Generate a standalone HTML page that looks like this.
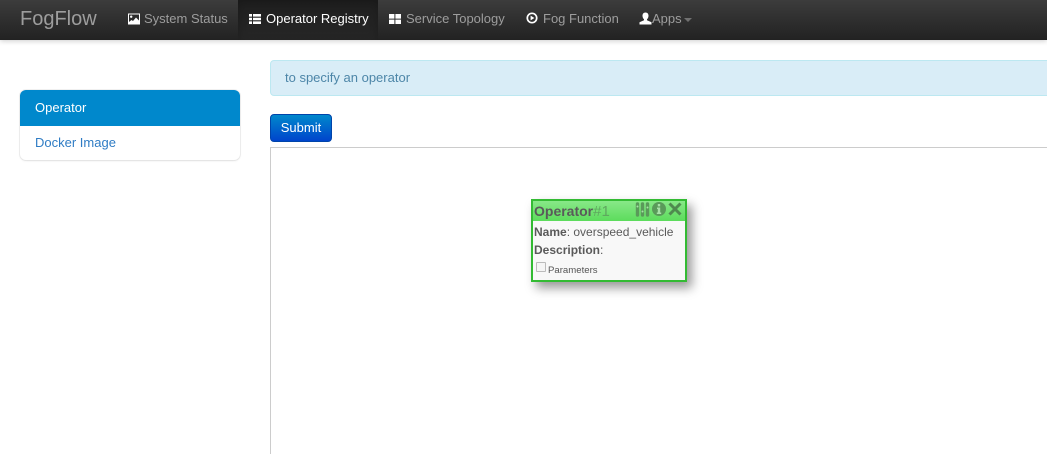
<!DOCTYPE html>
<html>
<head>
<meta charset="utf-8">
<style>
*{box-sizing:border-box}
html,body{margin:0;padding:0;width:1047px;height:454px;overflow:hidden;background:#fff;font-family:"Liberation Sans",sans-serif;font-size:13px;color:#333;position:relative}
.abs{position:absolute;white-space:nowrap}
#nav{position:absolute;left:0;top:0;width:1047px;height:40px;background:linear-gradient(to bottom,#3c3c3c,#222);box-shadow:0 1px 5px rgba(0,0,0,.2)}
#active{position:absolute;left:238px;top:0;width:140px;height:40px;background:linear-gradient(to bottom,#1f1f1f,#262626);box-shadow:inset 0 3px 9px rgba(0,0,0,.2)}
.brand{left:20px;top:7px;font-size:20px;line-height:24px;color:#9d9d9d}
.nl{top:10px;line-height:18px;font-size:13px;color:#9d9d9d}
.ic{position:absolute}
#side{position:absolute;left:20px;top:90px;width:220px;height:70px;border-radius:6px;box-shadow:0 0 0 1px rgba(0,0,0,.05),0 1px 2px rgba(0,0,0,.08);background:#fff;overflow:hidden}
#side .a{height:36px;background:#0088cc;color:#fff;padding:9px 15px;line-height:18px;font-size:13px}
#side .b{padding:8px 15px;line-height:18px;font-size:13px;color:#2f7cc4}
#alert{position:absolute;left:270px;top:60px;width:790px;height:36px;background:#d9edf7;border:1px solid #bce8f1;border-radius:4px;color:#4d86a8;padding:8px 14px;line-height:18px;font-size:13px}
#btn{position:absolute;left:270px;top:114px;width:62px;height:28px;border-radius:4px;background:linear-gradient(to bottom,#0088cc,#0044cc);border:1px solid #0044aa;color:#fff;text-align:center;line-height:25px;font-size:13px}
#canvas{position:absolute;left:270px;top:147px;width:800px;height:320px;border:1px solid #ccc}
#op{position:absolute;left:531px;top:199px;width:156px;height:83px;border:2px solid #33bb33;background:#f8f8f8;box-shadow:5px 6px 10px rgba(0,0,0,.4)}
#ophead{position:absolute;left:0;top:0;width:152px;height:20px;background:linear-gradient(to bottom,#88e888,#5cdc5c)}
</style>
</head>
<body>
<div id="nav"></div>
<div id="active"></div>
<div class="abs brand">FogFlow</div>

<svg class="ic" style="left:128px;top:13px" width="12" height="12" viewBox="0 0 12 12"><rect width="12" height="11" y="0.5" fill="#fff"/><rect x="1" y="1.5" width="10" height="9" fill="#2c2c2c"/><circle cx="3.2" cy="3.7" r="1.2" fill="#fff"/><path d="M1 10.5V9l2.5-2 1.5 1 3-3.5 3 3v3z" fill="#fff"/></svg>
<div class="abs nl" style="left:144px">System Status</div>

<svg class="ic" style="left:249px;top:13px" width="12" height="12" viewBox="0 0 12 12" fill="#fff"><path d="M0 1h3v2.6H0zM4 1h8v2.6H4zM0 4.700h3v2.600H0zM4 4.700h8v2.600H4zM0 8.400h3V11H0zM4 8.400h8V11H4z"/></svg>
<div class="abs nl" style="left:266px;color:#fff">Operator Registry</div>

<svg class="ic" style="left:389px;top:13px" width="12" height="12" viewBox="0 0 12 12" fill="#fff"><path d="M0 1h5.400v4.600H0zM6.400 1H12v4.600H6.400zM0 6.600h5.400V11H0zM6.400 6.600H12V11H6.400z"/></svg>
<div class="abs nl" style="left:406px">Service Topology</div>

<svg class="ic" style="left:526px;top:12px" width="12" height="12" viewBox="0 0 12 12"><circle cx="6" cy="6" r="4.700" fill="none" stroke="#fff" stroke-width="1.700"/><path d="M4.600 3.600L8.400 6 4.600 8.400z" fill="#fff"/></svg>
<div class="abs nl" style="left:543px">Fog Function</div>

<svg class="ic" style="left:639px;top:12px" width="13" height="13" viewBox="0 0 13 13" fill="#fff"><path d="M6.500 0.500c1.900 0 3 1.400 3 3.200 0 1.400-.6 2.800-1.500 3.600v1l4.500 2v2.200H.5v-2.200l4.500-2v-1C4.100 6.500 3.500 5.100 3.500 3.700c0-1.800 1.100-3.200 3-3.200z"/></svg>
<div class="abs nl" style="left:652px">Apps</div>
<div class="abs" style="left:684px;top:18px;width:0;height:0;border-left:4px solid transparent;border-right:4px solid transparent;border-top:4px solid #9d9d9d;opacity:.6"></div>

<div id="side">
  <div class="a">Operator</div>
  <div class="b">Docker Image</div>
</div>

<div id="alert">to specify an operator</div>
<div id="btn">Submit</div>
<div id="canvas"></div>

<div id="op">
  <div id="ophead"></div>
  <div class="abs" style="left:1px;top:1px;font-size:14px;line-height:18px;font-weight:bold;color:#5a5a5a">Operator<span style="font-weight:normal;font-size:15px;color:#5fa85f">#1</span></div>
  <svg class="ic" style="left:102px;top:1px" width="15" height="15" viewBox="0 0 15 15" fill="none" stroke="#5a9a5a" stroke-width="3.400" stroke-linecap="round"><path d="M2.500 2v11M7.500 2v11M12.500 2v11"/><g fill="#a8e0a8" stroke="none"><circle cx="2.500" cy="4.500" r="1"/><circle cx="7.500" cy="9.500" r="1"/><circle cx="12.500" cy="5.500" r="1"/></g></svg>
  <svg class="ic" style="left:119px;top:1px" width="14" height="14" viewBox="0 0 14 14"><circle cx="7" cy="7" r="7" fill="#5a9a5a"/><rect x="5.800" y="2" width="2.400" height="2.400" fill="#a8e0a8"/><path d="M5 5.500h3.200v5H9.200V12H4.800v-1.500h1V7H5z" fill="#a8e0a8"/></svg>
  <svg class="ic" style="left:135px;top:1px" width="14" height="14" viewBox="0 0 14 14"><path d="M1.500 1.500l11 11M12.500 1.500l-11 11" stroke="#4f8a4f" stroke-width="3" fill="none"/></svg>
  <div class="abs" style="left:1px;top:23px;font-size:12px;line-height:16px;color:#5a5a5a"><b>Name</b>: overspeed_vehicle</div>
  <div class="abs" style="left:1px;top:41px;font-size:12px;line-height:16px;color:#5a5a5a"><b>Description</b>:</div>
  <div class="abs" style="left:3px;top:61px;width:10px;height:10px;border:1px solid #bbb;background:#f5f5f5;border-radius:1px"></div>
  <div class="abs" style="left:15px;top:63px;font-size:9.600px;line-height:13px;color:#555">Parameters</div>
</div>
</body>
</html>
